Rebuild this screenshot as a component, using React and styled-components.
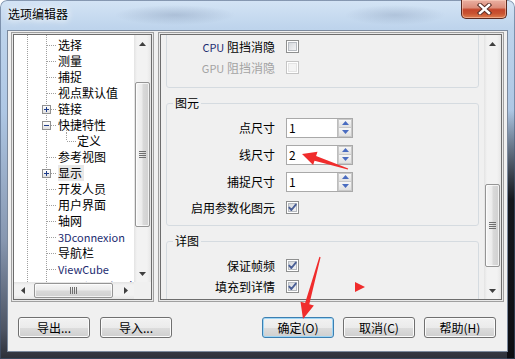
import React from "react"
import styled, { createGlobalStyle, css } from "styled-components"

const GlobalStyle = createGlobalStyle`
  html, body {
    margin: 0;
    padding: 0;
    background: #ffffff;
  }
  body {
    font-family: "Noto Sans CJK SC", "Liberation Sans", sans-serif;
  }
  * {
    box-sizing: border-box;
  }
`

const dots = dir =>
  `repeating-linear-gradient(${dir}, #a0a0a0 0 1px, transparent 1px 2px)`

const Window = styled.div`
  position: relative;
  width: 515px;
  height: 359px;
  display: flex;
  flex-direction: column;
  border-radius: 7px 7px 0 0;
  overflow: hidden;
  background:
    linear-gradient(180deg, rgba(10, 10, 14, 0) 0, rgba(10, 10, 14, 0) 110px, rgba(10, 10, 14, 0.92) 200px) right top / 8px 100% no-repeat,
    radial-gradient(ellipse 60px 10px at 175px 15px, rgba(120, 140, 170, 0.35), transparent),
    radial-gradient(ellipse 50px 10px at 395px 15px, rgba(120, 140, 170, 0.3), transparent),
    linear-gradient(180deg, #d4e4f5 0, #bed4ec 28px, #aec7e4 110px, #8797b0 240px, #4d5463 330px, #2c2f38 359px);
  box-shadow: inset 0 0 0 1px rgba(70, 90, 120, 0.55);
`

const TitleBar = styled.div`
  flex: none;
  height: 30px;
  display: flex;
  align-items: flex-start;
  padding: 0 8px;
`

const Title = styled.div`
  margin-top: 6px;
  font-size: 12px;
  line-height: 16px;
  color: #000;
  text-shadow: 0 0 6px #fff, 0 0 10px rgba(255, 255, 255, 0.8);
`

const CloseButton = styled.div`
  margin-left: auto;
  width: 46px;
  height: 19px;
  border: 1px solid #5a2a20;
  border-top: none;
  border-radius: 0 0 5px 5px;
  background: linear-gradient(180deg, #eab0a2 0%, #dc8e7b 42%, #c4462b 54%, #c95331 75%, #de7d4f 100%);
  box-shadow: inset 0 0 0 1px rgba(255, 215, 195, 0.5);
  display: flex;
  align-items: center;
  justify-content: center;
`

const Client = styled.div`
  flex: 1;
  margin: 0 7px 7px;
  background: #f0f0f0;
  border: 1px solid #7b899d;
  display: flex;
  flex-direction: column;
  padding: 1px 3px 0;
`

const Panels = styled.div`
  height: 270px;
  display: flex;
  gap: 4px;
`

const SunkenFrame = styled.div`
  border: 1px solid #a0a0a0;
  padding: 1px;
  background: #e9e9e9;
  display: flex;
`

const TreeFrame = styled(SunkenFrame)`
  width: 143px;
  flex: none;
`

const TreeInner = styled.div`
  flex: 1;
  border: 1px solid #6d6d6d;
  background: #fff;
  display: grid;
  grid-template-columns: 1fr 17px;
  grid-template-rows: 1fr 17px;
  overflow: hidden;
`

const TreeList = styled.div`
  overflow: hidden;
  min-width: 0;
`

const TreeRows = styled.div`
  margin-top: -14px;
`

const Row = styled.div`
  display: flex;
  height: 16px;
  padding-left: 13px;
  white-space: nowrap;
`

const Guide = styled.div`
  flex: none;
  width: ${p => p.$w}px;
  background: ${dots("to bottom")} left top / 1px 100% no-repeat;
`

const Branch = styled.div`
  flex: none;
  width: ${p => p.$w}px;
  display: flex;
  align-items: center;
  background:
    ${dots("to bottom")} left top / 1px ${p => (p.$last ? "8px" : "100%")} no-repeat,
    ${dots("to right")} 1px 8px / ${p => p.$w - 2}px 1px no-repeat;
`

const Expander = styled.span`
  width: 9px;
  height: 9px;
  margin-left: -4px;
  border: 1px solid #919191;
  background: linear-gradient(180deg, #ffffff, #e0e0e0);
  display: flex;
`

const ItemLabel = styled.span`
  font-size: ${p => (p.$latin ? 11 : 12)}px;
  line-height: 16px;
  padding: 0 2px 0 0;
  color: ${p => (p.$latin ? "#1c2c70" : "#000")};
  background: ${p => (p.$hover ? "#e8e8e8" : "transparent")};
  ${p =>
    p.$open &&
    css`
      background: ${dots("to bottom")} 8px 13px / 1px 3px no-repeat;
    `}
`

const Corner = styled.div`
  background: #f0f0f0;
`

const Track = styled.div`
  display: flex;
  flex-direction: ${p => (p.$horizontal ? "row" : "column")};
  background: ${p =>
    p.$horizontal
      ? "linear-gradient(180deg, #e3e3e3 0, #f2f2f2 3px, #f2f2f2 13px, #e6e6e6 100%)"
      : "linear-gradient(90deg, #e3e3e3 0, #f2f2f2 3px, #f2f2f2 13px, #e6e6e6 100%)"};
  min-width: 0;
  min-height: 0;
`

const ArrowBtn = styled.div`
  flex: none;
  width: 17px;
  height: 17px;
  display: flex;
  align-items: center;
  justify-content: center;
`

const Rail = styled.div`
  flex: 1;
  display: flex;
  flex-direction: ${p => (p.$horizontal ? "row" : "column")};
`

const Thumb = styled.div`
  flex: none;
  border: 1px solid #959595;
  border-radius: 2px;
  display: flex;
  align-items: center;
  justify-content: center;
  ${p =>
    p.$horizontal
      ? css`
          width: ${p.$size}px;
          height: 15px;
          margin: 1px 0 0 ${p.$offset}px;
          background: linear-gradient(180deg, #f6f6f6 0%, #ebebeb 45%, #d9d9d9 55%, #d0d0d0 100%);
        `
      : css`
          height: ${p.$size}px;
          width: 15px;
          margin: ${p.$offset}px 0 0 1px;
          background: linear-gradient(90deg, #f6f6f6 0%, #ebebeb 45%, #d9d9d9 55%, #d0d0d0 100%);
        `}
  box-shadow: inset 0 0 0 1px rgba(255, 255, 255, 0.7);
`

const OptionsFrame = styled(SunkenFrame)`
  flex: 1;
`

const OptionsInner = styled.div`
  flex: 1;
  border: 1px solid #6d6d6d;
  background: #f0f0f0;
  display: flex;
  overflow: hidden;
`

const OptionsContent = styled.div`
  flex: 1;
  overflow: hidden;
  padding: 0 5px 0 5px;
`

const ScrolledGroup = styled.div`
  margin-top: -20px;
  padding: 20px 0 9px;
  border: 1px solid #d5dbe0;
  border-radius: 3px;
`

const Group = styled.fieldset`
  margin: 8px 0 0;
  padding: ${p => p.$pad};
  border: 1px solid #d5dbe0;
  border-radius: 3px;
  min-inline-size: 0;
  min-height: ${p => p.$minH || 0}px;
`

const Legend = styled.legend`
  margin-left: 6px;
  padding: 0 2px;
  font-size: 12px;
  line-height: 14px;
  color: #000;
`

const OptionRow = styled.div`
  display: grid;
  grid-template-columns: 108px auto;
  column-gap: 11px;
  align-items: center;
  height: ${p => p.$h}px;
`

const OptionLabel = styled.span`
  text-align: right;
  font-size: 12px;
  line-height: 14px;
  white-space: nowrap;
  color: ${p => (p.$disabled ? "#a3a3a3" : "#000")};
`

const Latin = styled.span`
  font-size: 11px;
  color: ${p => (p.$disabled ? "#a3a3a3" : "#1c2c70")};
`

const CheckBox = styled.span`
  width: 13px;
  height: 13px;
  border: 1px solid ${p => (p.$disabled ? "#c5c5c5" : "#8e8f8f")};
  background: ${p =>
    p.$disabled
      ? "#f4f4f4"
      : "linear-gradient(135deg, #cdd1d6 0%, #e9eaec 60%, #f8f8f8 100%)"};
  box-shadow: inset 0 0 0 1px #fff, inset 0 0 0 2px ${p => (p.$disabled ? "#e4e4e4" : "#b7bbc1")};
  display: flex;
`

const Spinner = styled.div`
  width: 67px;
  height: 20px;
  display: flex;
  border: 1px solid #a9a9a9;
  background: #fff;
`

const SpinValue = styled.div`
  flex: 1;
  padding-left: 2px;
  font-size: 12px;
  line-height: 18px;
  color: #000;
`

const SpinButtons = styled.div`
  width: 15px;
  display: flex;
  flex-direction: column;
  border: 1px solid #bdbdbd;
  border-width: 0 0 0 1px;
  padding: 1px;
  gap: 1px;
  background: #c9c9c9;
`

const SpinButton = styled.div`
  flex: 1;
  display: flex;
  align-items: center;
  justify-content: center;
  background: linear-gradient(180deg, #f7f7f7, #e0e0e0);
`

const ButtonRow = styled.div`
  margin-top: 15px;
  display: flex;
  padding: 0 8px 0 7px;
`

const ButtonGroup = styled.div`
  display: flex;
  gap: ${p => p.$gap}px;
  margin-left: ${p => (p.$right ? "auto" : "0")};
`

const DialogButton = styled.div`
  width: 72px;
  height: 21px;
  display: flex;
  align-items: center;
  justify-content: center;
  font-size: 12px;
  color: #000;
  border: 1px solid ${p => (p.$default ? "#3c7fb1" : "#707070")};
  border-radius: 3px;
  background: linear-gradient(180deg, #f2f2f2 0%, #ebebeb 50%, #dddddd 51%, #cfcfcf 100%);
  box-shadow: inset 0 0 0 1px ${p => (p.$default ? "#9fd6f5" : "#fbfbfb")};
`

const Annotations = styled.svg`
  position: absolute;
  left: 0;
  top: 0;
  pointer-events: none;
`

const Tri = ({ dir, color = "#3f3f3f" }) => {
  const pts = {
    up: "3.5,0 7,4 0,4",
    down: "0,0 7,0 3.5,4",
    left: "0,3.5 4,0 4,7",
    right: "0,0 4,3.5 0,7",
  }[dir]
  const vertical = dir === "up" || dir === "down"
  return (
    <svg width={vertical ? 7 : 4} height={vertical ? 4 : 7}>
      <polygon points={pts} fill={color} />
    </svg>
  )
}

const Grip = ({ horizontal }) => (
  <svg width={horizontal ? 8 : 7} height={horizontal ? 7 : 8}>
    {[0, 2, 4, 6].map(i =>
      horizontal ? (
        <rect key={i} x={i} y={0} width={1} height={7} fill="#6f6f6f" />
      ) : (
        <rect key={i} x={0} y={i} width={7} height={1} fill="#6f6f6f" />
      )
    )}
  </svg>
)

const ScrollBar = ({ horizontal, offset, size }) => (
  <Track $horizontal={horizontal}>
    <ArrowBtn>
      <Tri dir={horizontal ? "left" : "up"} />
    </ArrowBtn>
    <Rail $horizontal={horizontal}>
      <Thumb $horizontal={horizontal} $offset={offset} $size={size}>
        <Grip horizontal={horizontal} />
      </Thumb>
    </Rail>
    <ArrowBtn>
      <Tri dir={horizontal ? "right" : "down"} />
    </ArrowBtn>
  </Track>
)

const ExpanderBox = ({ open }) => (
  <Expander>
    <svg width="7" height="7">
      <rect x="1" y="3" width="5" height="1" fill="#1f3d8a" />
      {!open && <rect x="3" y="1" width="1" height="5" fill="#1f3d8a" />}
    </svg>
  </Expander>
)

const treeItems = [
  { text: "" },
  { text: "选择" },
  { text: "测量" },
  { text: "捕捉" },
  { text: "视点默认值" },
  { text: "链接", expander: "plus" },
  { text: "快捷特性", expander: "minus" },
  { text: "定义", child: true },
  { text: "参考视图" },
  { text: "显示", expander: "plus", hover: true },
  { text: "开发人员" },
  { text: "用户界面" },
  { text: "轴网" },
  { text: "3Dconnexion", latin: true },
  { text: "导航栏" },
  { text: "ViewCube", latin: true },
  { text: "SteeringWheels", latin: true },
]

const TreeRow = ({ item }) => (
  <Row>
    <Guide $w={19} />
    {item.child ? (
      <>
        <Guide $w={20} />
        <Branch $w={11} $last />
      </>
    ) : (
      <Branch $w={12}>
        {item.expander && <ExpanderBox open={item.expander === "minus"} />}
      </Branch>
    )}
    <ItemLabel
      $latin={item.latin}
      $hover={item.hover}
      $open={item.expander === "minus"}
    >
      {item.text}
    </ItemLabel>
  </Row>
)

const Check = ({ checked, disabled }) => (
  <CheckBox $disabled={disabled}>
    {checked && (
      <svg width="11" height="11" viewBox="0 0 11 11">
        <path
          d="M2.3 5.6 L4.4 8 L8.8 2.6"
          fill="none"
          stroke="#4a5f96"
          strokeWidth="1.9"
          strokeLinecap="round"
          strokeLinejoin="round"
        />
      </svg>
    )}
  </CheckBox>
)

const NumberSpin = ({ value }) => (
  <Spinner>
    <SpinValue>{value}</SpinValue>
    <SpinButtons>
      <SpinButton>
        <Tri dir="up" color="#4a6cc0" />
      </SpinButton>
      <SpinButton>
        <Tri dir="down" color="#4a6cc0" />
      </SpinButton>
    </SpinButtons>
  </Spinner>
)

export default function App() {
  return (
    <>
      <GlobalStyle />
      <Window>
        <TitleBar>
          <Title>选项编辑器</Title>
          <CloseButton>
            <svg width="15" height="12" viewBox="0 0 15 12">
              <path d="M3 2 L12 10 M12 2 L3 10" stroke="#5b3028" strokeWidth="4.4" strokeLinecap="square" />
              <path d="M3 2 L12 10 M12 2 L3 10" stroke="#ffffff" strokeWidth="2.4" strokeLinecap="square" />
            </svg>
          </CloseButton>
        </TitleBar>

        <Client>
          <Panels>
            <TreeFrame>
              <TreeInner>
                <TreeList>
                  <TreeRows>
                    {treeItems.map((item, i) => (
                      <TreeRow key={i} item={item} />
                    ))}
                  </TreeRows>
                </TreeList>
                <ScrollBar offset={30} size={145} />
                <ScrollBar horizontal offset={3} size={79} />
                <Corner />
              </TreeInner>
            </TreeFrame>

            <OptionsFrame>
              <OptionsInner>
                <OptionsContent>
                  <ScrolledGroup>
                    <OptionRow $h={21}>
                      <OptionLabel>
                        <Latin>CPU</Latin> 阻挡消隐
                      </OptionLabel>
                      <Check />
                    </OptionRow>
                    <OptionRow $h={21}>
                      <OptionLabel $disabled>
                        <Latin $disabled>GPU</Latin> 阻挡消隐
                      </OptionLabel>
                      <Check disabled />
                    </OptionRow>
                  </ScrolledGroup>

                  <Group $pad="4px 0 5px">
                    <Legend>图元</Legend>
                    <OptionRow $h={27}>
                      <OptionLabel>点尺寸</OptionLabel>
                      <NumberSpin value="1" />
                    </OptionRow>
                    <OptionRow $h={27}>
                      <OptionLabel>线尺寸</OptionLabel>
                      <NumberSpin value="2" />
                    </OptionRow>
                    <OptionRow $h={27}>
                      <OptionLabel>捕捉尺寸</OptionLabel>
                      <NumberSpin value="1" />
                    </OptionRow>
                    <OptionRow $h={25}>
                      <OptionLabel>启用参数化图元</OptionLabel>
                      <Check checked />
                    </OptionRow>
                  </Group>

                  <Group $pad="7px 0 0" $minH={90}>
                    <Legend>详图</Legend>
                    <OptionRow $h={21}>
                      <OptionLabel>保证帧频</OptionLabel>
                      <Check checked />
                    </OptionRow>
                    <OptionRow $h={21}>
                      <OptionLabel>填充到详情</OptionLabel>
                      <Check checked />
                    </OptionRow>
                  </Group>
                </OptionsContent>
                <ScrollBar offset={132} size={83} />
              </OptionsInner>
            </OptionsFrame>
          </Panels>

          <ButtonRow>
            <ButtonGroup $gap={10}>
              <DialogButton>导出...</DialogButton>
              <DialogButton>导入...</DialogButton>
            </ButtonGroup>
            <ButtonGroup $gap={9} $right>
              <DialogButton $default>确定(O)</DialogButton>
              <DialogButton>取消(C)</DialogButton>
              <DialogButton>帮助(H)</DialogButton>
            </ButtonGroup>
          </ButtonRow>
        </Client>

        <Annotations width="515" height="359">
          <polygon
            points="302,154 317.5,151.7 316.1,155.9 348.2,168.4 347.8,169.6 314.5,160.7 313.1,165"
            fill="#f02c2c"
          />
          <polygon
            points="303,319 313.9,305.4 309.3,304.2 320.6,257.2 319.4,256.8 305.1,303 300.5,301.8"
            fill="#f02c2c"
          />
          <polygon points="355,282 355,292 365,287" fill="#f02c2c" />
        </Annotations>
      </Window>
    </>
  )
}
